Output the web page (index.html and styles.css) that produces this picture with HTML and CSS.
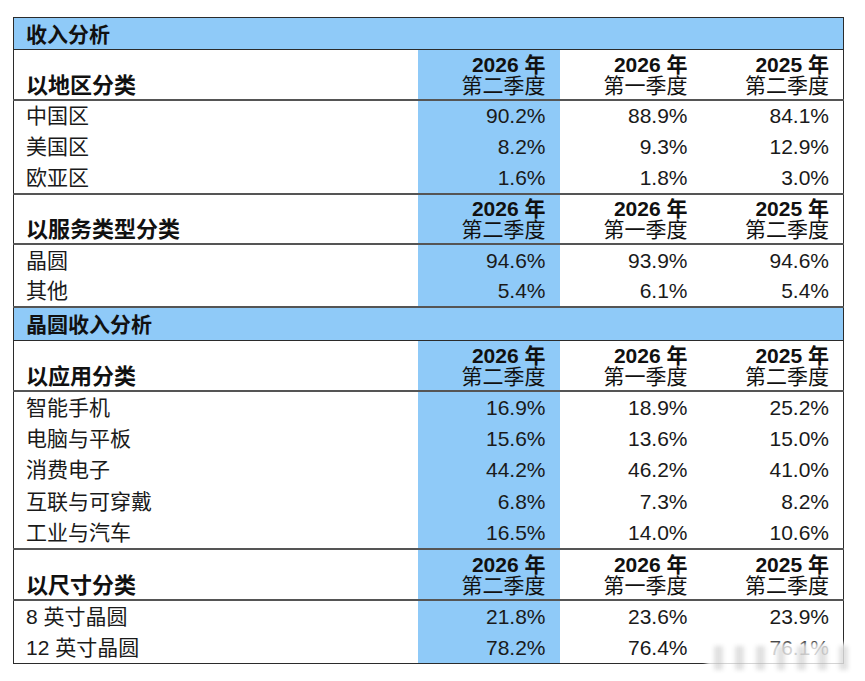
FILE: index.html
```html
<!DOCTYPE html>
<html lang="zh-CN">
<head>
<meta charset="utf-8">
<link rel="stylesheet" href="styles.css">
</head>
<body>
<div class="page">
<table class="rev">
<colgroup><col class="c-label"><col class="c-num"><col class="c-num"><col class="c-num"></colgroup>
<tbody>
<tr class="band"><td colspan="4">收入分析</td></tr>
<tr class="head"><td class="lbl">以地区分类</td><td class="hl"><b>2026 年</b><br>第二季度</td><td><b>2026 年</b><br>第一季度</td><td><b>2025 年</b><br>第二季度</td></tr>
<tr class="row"><td class="lbl">中国区</td><td class="hl">90.2%</td><td>88.9%</td><td>84.1%</td></tr>
<tr class="row"><td class="lbl">美国区</td><td class="hl">8.2%</td><td>9.3%</td><td>12.9%</td></tr>
<tr class="row last"><td class="lbl">欧亚区</td><td class="hl">1.6%</td><td>1.8%</td><td>3.0%</td></tr>
<tr class="head"><td class="lbl">以服务类型分类</td><td class="hl"><b>2026 年</b><br>第二季度</td><td><b>2026 年</b><br>第一季度</td><td><b>2025 年</b><br>第二季度</td></tr>
<tr class="row"><td class="lbl">晶圆</td><td class="hl">94.6%</td><td>93.9%</td><td>94.6%</td></tr>
<tr class="row last"><td class="lbl">其他</td><td class="hl">5.4%</td><td>6.1%</td><td>5.4%</td></tr>
<tr class="band tall"><td colspan="4">晶圆收入分析</td></tr>
<tr class="head tall"><td class="lbl">以应用分类</td><td class="hl"><b>2026 年</b><br>第二季度</td><td><b>2026 年</b><br>第一季度</td><td><b>2025 年</b><br>第二季度</td></tr>
<tr class="row"><td class="lbl">智能手机</td><td class="hl">16.9%</td><td>18.9%</td><td>25.2%</td></tr>
<tr class="row"><td class="lbl">电脑与平板</td><td class="hl">15.6%</td><td>13.6%</td><td>15.0%</td></tr>
<tr class="row"><td class="lbl">消费电子</td><td class="hl">44.2%</td><td>46.2%</td><td>41.0%</td></tr>
<tr class="row"><td class="lbl">互联与可穿戴</td><td class="hl">6.8%</td><td>7.3%</td><td>8.2%</td></tr>
<tr class="row last"><td class="lbl">工业与汽车</td><td class="hl">16.5%</td><td>14.0%</td><td>10.6%</td></tr>
<tr class="head tall"><td class="lbl">以尺寸分类</td><td class="hl"><b>2026 年</b><br>第二季度</td><td><b>2026 年</b><br>第一季度</td><td><b>2025 年</b><br>第二季度</td></tr>
<tr class="row"><td class="lbl">8 英寸晶圆</td><td class="hl">21.8%</td><td>23.6%</td><td>23.9%</td></tr>
<tr class="row"><td class="lbl">12 英寸晶圆</td><td class="hl">78.2%</td><td>76.4%</td><td>76.1%</td></tr>
</tbody>
</table>
<div class="watermark"><span></span><span></span><span></span><span></span><span></span><span></span><span></span></div>
</div>
</body>
</html>
```
FILE: styles.css
```css
html, body {
  margin: 0;
  padding: 0;
  background: #ffffff;
}
.page {
  position: relative;
  width: 865px;
  height: 681px;
  padding: 17px 0 0 13px;
  box-sizing: border-box;
  font-family: "Liberation Sans", "Noto Sans CJK SC", sans-serif;
  color: #111111;
}
.rev {
  border-collapse: collapse;
  table-layout: fixed;
  width: 830px;
  border: 1px solid #2b2b2b;
  font-size: 21px;
}
.c-label { width: 404px; }
.c-num { width: 142px; }
.rev td {
  padding: 0 14px 0 12px;
  text-align: right;
  white-space: nowrap;
  box-sizing: border-box;
}
.rev td.lbl { text-align: left; }
.rev td.hl { background: #8fcaf8; }
.band td {
  height: 32px;
  background: #8fcaf8;
  font-weight: bold;
  text-align: left;
  border-bottom: 1px solid #2b2b2b;
  line-height: 26px;
  padding-top: 2px;
}
.band.tall td { height: 33px; }
.head td {
  height: 50px;
  vertical-align: bottom;
  line-height: 21px;
  padding-bottom: 3px;
  border-bottom: 2px solid #555555;
}
.head.tall td { height: 51px; }
.head td b { font-weight: bold; }
.head td.lbl {
  font-weight: bold;
  font-size: 22px;
  line-height: 21px;
}
.row td {
  height: 31.6px;
  line-height: 24px;
  vertical-align: middle;
  color: #1a1a1a;
}
.row.last td { border-bottom: 2px solid #555555; }
.watermark {
  position: absolute;
  left: 706px;
  top: 643px;
  width: 150px;
  height: 30px;
  display: flex;
  gap: 12px;
  align-items: stretch;
  padding: 3px 8px;
  box-sizing: border-box;
  background: rgba(255, 255, 255, 0.8);
  filter: blur(2px);
}
.watermark span {
  flex: 1;
  background: rgba(170, 170, 170, 0.35);
}
```
